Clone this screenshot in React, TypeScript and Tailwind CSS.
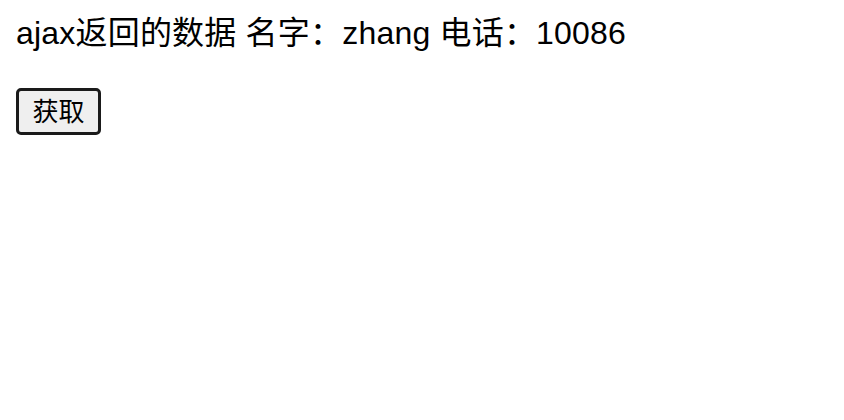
import React from "react";

export default function App() {
  const data = { name: "zhang", phone: "10086" };
  return (
    <div
      className="min-h-[420px] bg-white p-4 text-black"
      style={{ fontFamily: '"Liberation Sans", "Noto Sans CJK SC", sans-serif' }}
    >
      <div className="text-[32px] leading-[34px] tracking-[0.2px]">
        ajax返回的数据 名字：{data.name} 电话：{data.phone}
      </div>
      <button className="mt-[38px] flex h-[47px] w-[85px] items-center justify-center rounded-[5px] border-[3px] border-[#1a1a1a] bg-[#efefef] text-[26px] leading-none">
        获取
      </button>
    </div>
  );
}
